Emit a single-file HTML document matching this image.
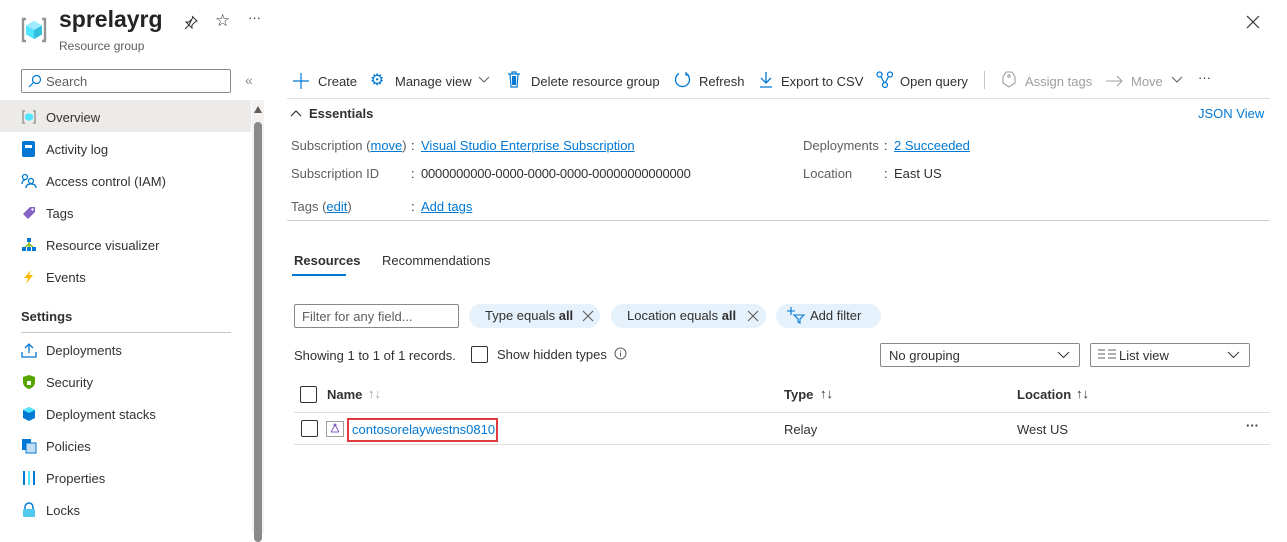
<!DOCTYPE html>
<html><head><meta charset="utf-8"><style>
*{margin:0;padding:0;box-sizing:border-box}
body{width:1287px;height:534px;overflow:hidden;background:#fff;font-family:"Liberation Sans",sans-serif;font-size:13px;color:#323130;position:relative}
.a{position:absolute;white-space:nowrap}
.l{color:#0078d4;text-decoration:underline}
.g{color:#605e5c}
.nav{position:absolute;left:46px;font-size:13px}
.ic{position:absolute;left:21px;width:16px;height:16px}
.pill{position:absolute;top:304px;height:24px;background:#e5f1fb;border-radius:12px;line-height:24px;padding-left:16px}
.cb{position:absolute;width:17px;height:17px;border:1px solid #323130;border-radius:2px}
.hl{position:absolute;height:1px;background:#e1dfdd}
</style></head><body>
<!-- header -->
<svg class="a" style="left:20px;top:16px" width="28" height="28" viewBox="0 0 28 28">
<path d="M6 3H3v22h3" stroke="#949494" stroke-width="2.4" fill="none"/><path d="M22 3h3v22h-3" stroke="#949494" stroke-width="2.4" fill="none"/>
<path d="M14 5l8 4.5v9L14 23l-8-4.5v-9z" fill="#50e6ff"/><path d="M14 14l8-4.5v9L14 23z" fill="#32bedd"/><path d="M6 9.5L14 5l8 4.5L14 14z" fill="#9cebff"/></svg>
<div class="a" style="left:59px;top:6px;font-size:23px;font-weight:bold;color:#242424">sprelayrg</div>
<div class="a g" style="left:59px;top:39px;font-size:12px">Resource group</div>
<svg class="a" style="left:183px;top:14px" width="16" height="16" viewBox="0 0 16 16" fill="none" stroke="#323130"><path d="M9 2l5 5-2 1-3 3v3L6 11l-4 4M6 11L3 8h3l3-3 1-2z"/></svg>
<div class="a" style="left:215px;top:11px;font-size:17px">☆</div>
<div class="a" style="left:248px;top:10px;font-size:13px">···</div>
<svg class="a" style="left:1246px;top:15px" width="14" height="14" viewBox="0 0 14 14"><path d="M1 1l12 12M13 1L1 13" stroke="#323130" stroke-width="1.2"/></svg>
<!-- search -->
<div class="a" style="left:21px;top:69px;width:210px;height:24px;border:1px solid #8a8886;border-radius:2px"></div>
<svg class="a" style="left:28px;top:74px" width="14" height="14" viewBox="0 0 14 14" fill="none" stroke="#0078d4" stroke-width="1.2"><circle cx="8.5" cy="5.5" r="4"/><path d="M5.5 8.5L1 13"/></svg>
<div class="a g" style="left:46px;top:74px">Search</div>
<div class="a" style="left:245px;top:72px;color:#8a8886;font-size:14px">«</div>
<!-- nav -->
<div class="a" style="left:0;top:100px;width:251px;height:32px;background:#edebe9"></div>
<svg class="ic" style="top:109px" viewBox="0 0 16 16"><path d="M4 2H2v12h2M12 2h2v12h-2" stroke="#999" stroke-width="1.5" fill="none"/><path d="M8 4l4 2v4l-4 2-4-2V6z" fill="#50e6ff"/></svg>
<div class="nav" style="top:110px">Overview</div>
<div class="ic" style="top:141px;left:22px;width:13px;height:16px;background:#0078d4;border-radius:2px"><div style="margin:4px 3px;height:3px;background:#fff"></div></div>
<div class="nav" style="top:142px">Activity log</div>
<svg class="ic" style="top:173px" viewBox="0 0 16 16" fill="none" stroke="#0078d4" stroke-width="1.3"><circle cx="4" cy="4" r="2.5"/><circle cx="10" cy="8" r="2.5"/><path d="M1 11c0-2 1-4 3-4M5 15c0-3 2-4 5-4s5 1 5 4"/></svg>
<div class="nav" style="top:174px">Access control (IAM)</div>
<svg class="ic" style="top:205px" viewBox="0 0 16 16"><path d="M2 9l7-7h5v5l-7 7z" fill="#8661c5"/><circle cx="11.5" cy="4.5" r="1.2" fill="#fff"/></svg>
<div class="nav" style="top:206px">Tags</div>
<svg class="ic" style="top:237px" viewBox="0 0 16 16"><rect x="6" y="1" width="4" height="4" fill="#0078d4"/><path d="M8 5v6M3 11l5-4 5 4" stroke="#7fba00" stroke-width="1.3" fill="none"/><rect x="1" y="10" width="4" height="4" fill="#0078d4"/><rect x="6" y="10" width="4" height="4" fill="#0078d4"/><rect x="11" y="10" width="4" height="4" fill="#0078d4"/></svg>
<div class="nav" style="top:238px">Resource visualizer</div>
<svg class="ic" style="top:269px" viewBox="0 0 16 16"><path d="M10 1L3 9h4l-2 6 7-9H8z" fill="#ffb900"/></svg>
<div class="nav" style="top:270px">Events</div>
<div class="a" style="left:21px;top:309px;font-weight:bold">Settings</div>
<div class="hl" style="left:21px;top:332px;width:210px;background:#c8c6c4"></div>
<svg class="ic" style="top:342px" viewBox="0 0 16 16" fill="none" stroke="#0078d4" stroke-width="1.3"><path d="M8 11V2M4 6l4-4 4 4M1 10v5h14v-5"/></svg>
<div class="nav" style="top:343px">Deployments</div>
<svg class="ic" style="top:374px" viewBox="0 0 16 16"><path d="M8 1l6 2v5c0 4-3 6-6 7-3-1-6-3-6-7V3z" fill="#57a300"/><rect x="6" y="7" width="4" height="4" fill="#fff"/></svg>
<div class="nav" style="top:375px">Security</div>
<svg class="ic" style="top:406px" viewBox="0 0 16 16"><path d="M8 1l6 3v8l-6 3-6-3V4z" fill="#0078d4"/><path d="M8 1l6 3-6 3-6-3z" fill="#50e6ff"/></svg>
<div class="nav" style="top:407px">Deployment stacks</div>
<svg class="ic" style="top:438px" viewBox="0 0 16 16"><rect x="1" y="1" width="9" height="11" fill="#0078d4"/><rect x="5" y="5" width="10" height="10" fill="#c3ddf5" stroke="#0078d4"/></svg>
<div class="nav" style="top:439px">Policies</div>
<svg class="ic" style="top:470px" viewBox="0 0 16 16"><rect x="2" y="1" width="2" height="14" fill="#0078d4"/><rect x="7" y="1" width="2" height="14" fill="#50e6ff"/><rect x="12" y="1" width="2" height="14" fill="#0078d4"/></svg>
<div class="nav" style="top:471px">Properties</div>
<svg class="ic" style="top:502px" viewBox="0 0 16 16"><path d="M4 7V5a4 4 0 018 0v2" stroke="#0078d4" stroke-width="1.5" fill="none"/><rect x="2" y="7" width="12" height="8" rx="1" fill="#50c8f0"/></svg>
<div class="nav" style="top:503px">Locks</div>
<!-- scrollbar -->
<div class="a" style="left:252px;top:100px;width:12px;height:434px;background:#f3f2f1"></div>
<div class="a" style="left:254px;top:106px;width:0;height:0;border-left:4px solid transparent;border-right:4px solid transparent;border-bottom:7px solid #605e5c"></div>
<div class="a" style="left:254px;top:122px;width:8px;height:420px;background:#8a8a8a;border-radius:4px"></div>
<!-- toolbar -->
<svg class="a" style="left:293px;top:73px" width="16" height="16"><path d="M8 0v16M0 8h16" stroke="#0078d4" stroke-width="1.2"/></svg>
<div class="a" style="left:318px;top:74px">Create</div>
<div class="a" style="left:370px;top:70px;font-size:16px;color:#0078d4">⚙</div>
<div class="a" style="left:395px;top:74px">Manage view</div>
<svg class="a" style="left:478px;top:76px" width="12" height="8"><path d="M1 1l5 5 5-5" stroke="#605e5c" fill="none"/></svg>
<svg class="a" style="left:507px;top:71px" width="14" height="17" viewBox="0 0 14 17" fill="none" stroke="#0078d4" stroke-width="1.2"><path d="M1 3h12M5 3V1h4v2M3 3l1 13h6l1-13"/><rect x="5" y="5" width="4" height="9" fill="#0078d4" stroke="none"/></svg>
<div class="a" style="left:531px;top:74px">Delete resource group</div>
<svg class="a" style="left:674px;top:71px" width="17" height="17" viewBox="0 0 17 17" fill="none" stroke="#0078d4" stroke-width="1.3"><path d="M5 2.5A7 7 0 1012 2.5M12 1v3h3"/></svg>
<div class="a" style="left:699px;top:74px">Refresh</div>
<svg class="a" style="left:759px;top:71px" width="14" height="17" viewBox="0 0 14 17" fill="none" stroke="#0078d4" stroke-width="1.3"><path d="M7 1v11M2 7l5 5 5-5M1 16h12"/></svg>
<div class="a" style="left:781px;top:74px">Export to CSV</div>
<svg class="a" style="left:876px;top:71px" width="18" height="18" viewBox="0 0 18 18" fill="none" stroke="#0078d4" stroke-width="1.2"><circle cx="3.5" cy="3.5" r="2.5"/><circle cx="14" cy="3.5" r="2.5"/><circle cx="9" cy="14" r="2.5"/><path d="M5 5.5l3 6M12.5 5.5l-3 6"/></svg>
<div class="a" style="left:900px;top:74px">Open query</div>
<div class="a" style="left:984px;top:71px;width:1px;height:18px;background:#c8c6c4"></div>
<svg class="a" style="left:1002px;top:71px" width="14" height="17" viewBox="0 0 14 17" fill="none" stroke="#a19f9d" stroke-width="1.1"><path d="M4 1h6l3 5v6l-6 4-6-4V6z"/><circle cx="7" cy="5" r="1.2"/></svg>
<div class="a" style="left:1025px;top:74px;color:#a19f9d">Assign tags</div>
<svg class="a" style="left:1106px;top:75px" width="17" height="12" viewBox="0 0 17 12" fill="none" stroke="#a19f9d" stroke-width="1.1"><path d="M0 6h16M11 1l5 5-5 5"/></svg>
<div class="a" style="left:1131px;top:74px;color:#a19f9d">Move</div>
<svg class="a" style="left:1171px;top:76px" width="12" height="8"><path d="M1 1l5 5 5-5" stroke="#605e5c" fill="none"/></svg>
<div class="a" style="left:1198px;top:70px">···</div>
<div class="hl" style="left:287px;top:98px;width:983px"></div>
<!-- essentials -->
<svg class="a" style="left:290px;top:109px" width="12" height="8"><path d="M1 7l5-5 5 5" stroke="#323130" fill="none" stroke-width="1.2"/></svg>
<div class="a" style="left:309px;top:106px;font-weight:bold;color:#323130">Essentials</div>
<div class="a" style="left:1198px;top:106px;color:#0078d4">JSON View</div>
<div class="a g" style="left:291px;top:138px">Subscription (<span class="l">move</span>)</div>
<div class="a" style="left:411px;top:138px">:</div>
<div class="a l" style="left:421px;top:138px">Visual Studio Enterprise Subscription</div>
<div class="a g" style="left:291px;top:166px">Subscription ID</div>
<div class="a" style="left:411px;top:166px">:</div>
<div class="a" style="left:421px;top:166px;letter-spacing:-0.2px">0000000000-0000-0000-0000-00000000000000</div>
<div class="a g" style="left:291px;top:199px">Tags (<span class="l">edit</span>)</div>
<div class="a" style="left:411px;top:199px">:</div>
<div class="a l" style="left:421px;top:199px">Add tags</div>
<div class="a g" style="left:803px;top:138px">Deployments</div>
<div class="a" style="left:884px;top:138px">:</div>
<div class="a l" style="left:894px;top:138px">2 Succeeded</div>
<div class="a g" style="left:803px;top:166px">Location</div>
<div class="a" style="left:884px;top:166px">:</div>
<div class="a" style="left:894px;top:166px">East US</div>
<div class="hl" style="left:287px;top:220px;width:983px;background:#d2d0ce"></div>
<!-- tabs -->
<div class="a" style="left:294px;top:253px;font-weight:bold">Resources</div>
<div class="a" style="left:292px;top:274px;width:54px;height:2px;background:#0078d4"></div>
<div class="a" style="left:382px;top:253px">Recommendations</div>
<!-- filters -->
<div class="a" style="left:294px;top:304px;width:165px;height:24px;border:1px solid #8a8886;border-radius:2px"></div>
<div class="a g" style="left:302px;top:309px">Filter for any field...</div>
<div class="pill" style="left:469px;width:131px">Type equals <b>all</b></div>
<svg class="a" style="left:582px;top:310px" width="12" height="12"><path d="M1 1l10 10M11 1L1 11" stroke="#605e5c" stroke-width="1.1"/></svg>
<div class="pill" style="left:611px;width:155px">Location equals <b>all</b></div>
<svg class="a" style="left:747px;top:310px" width="12" height="12"><path d="M1 1l10 10M11 1L1 11" stroke="#605e5c" stroke-width="1.1"/></svg>
<div class="pill" style="left:776px;width:105px;padding-left:34px">Add filter</div>
<svg class="a" style="left:787px;top:307px" width="18" height="17" viewBox="0 0 18 17" fill="none" stroke="#0078d4" stroke-width="1.1"><path d="M4 0v8M0 4h8M7 8h10l-4 4v4l-2-1v-3z"/></svg>
<div class="a" style="left:294px;top:348px">Showing 1 to 1 of 1 records.</div>
<div class="cb" style="left:471px;top:346px"></div>
<div class="a" style="left:497px;top:347px">Show hidden types</div>
<svg class="a" style="left:614px;top:347px" width="13" height="13" viewBox="0 0 13 13" fill="none" stroke="#605e5c"><circle cx="6.5" cy="6.5" r="5.5"/><path d="M6.5 5.5v4M6.5 3.5v1"/></svg>
<div class="a" style="left:880px;top:343px;width:200px;height:24px;border:1px solid #8a8886;border-radius:2px"></div>
<div class="a" style="left:889px;top:348px">No grouping</div>
<svg class="a" style="left:1057px;top:351px" width="13" height="8"><path d="M1 1l5.5 5.5L12 1" stroke="#323130" fill="none"/></svg>
<div class="a" style="left:1090px;top:343px;width:160px;height:24px;border:1px solid #8a8886;border-radius:2px"></div>
<svg class="a" style="left:1098px;top:349px" width="18" height="10"><path d="M0 1h7M0 5h7M0 9h7M10 1h8M10 5h8M10 9h8" stroke="#605e5c"/></svg>
<div class="a" style="left:1119px;top:348px">List view</div>
<svg class="a" style="left:1227px;top:351px" width="13" height="8"><path d="M1 1l5.5 5.5L12 1" stroke="#323130" fill="none"/></svg>
<!-- table -->
<div class="cb" style="left:300px;top:386px"></div>
<div class="a" style="left:327px;top:387px;font-weight:bold">Name</div>
<div class="a" style="left:368px;top:386px;color:#a19f9d">↑↓</div>
<div class="a" style="left:784px;top:387px;font-weight:bold">Type</div>
<div class="a" style="left:820px;top:386px">↑↓</div>
<div class="a" style="left:1017px;top:387px;font-weight:bold">Location</div>
<div class="a" style="left:1076px;top:386px">↑↓</div>
<div class="hl" style="left:294px;top:412px;width:976px"></div>
<div class="cb" style="left:301px;top:420px"></div>
<svg class="a" style="left:326px;top:421px" width="18" height="16" viewBox="0 0 18 16"><rect x="0.5" y="0.5" width="17" height="15" fill="none" stroke="#a19f9d"/><path d="M9 4L5 11M9 4l4 7M5 11h8" stroke="#8661c5" fill="none"/><circle cx="9" cy="4" r="1.5" fill="#8661c5"/></svg>
<div class="a" style="left:347px;top:418px;width:151px;height:24px;border:2px solid #e0393e"></div>
<div class="a" style="left:352px;top:422px;color:#0078d4">contosorelaywestns0810</div>
<div class="a" style="left:784px;top:422px">Relay</div>
<div class="a" style="left:1017px;top:422px">West US</div>
<div class="a" style="left:1246px;top:418px;font-weight:bold">···</div>
<div class="hl" style="left:294px;top:444px;width:976px"></div>
</body></html>
